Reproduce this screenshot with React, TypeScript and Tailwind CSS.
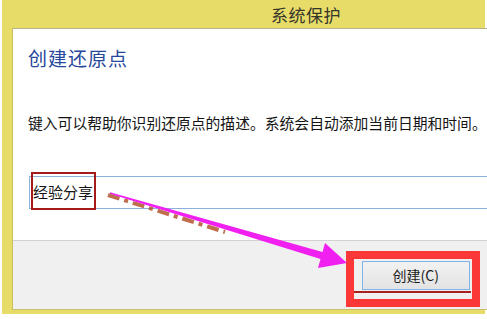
import React from "react";

export default function App() {
  return (
    <div
      className="relative w-[487px] h-[319px] bg-white overflow-hidden"
      style={{ fontFamily: '"Noto Sans CJK SC", "Noto Sans", sans-serif' }}
    >
      <div className="ml-[2px] w-[483px] h-[314px] bg-[#e8dc68] flex flex-col">
        <div className="h-[28px] shrink-0 flex items-center pl-[269px] text-[17px] leading-none text-[#35352a] tracking-[0.5px]">
          系统保护
        </div>
        <div className="flex-1 flex pl-[10px] pb-[4px]">
          <div className="flex-1 flex flex-col border-l border-t border-b border-l-[#c9bf5c] border-t-[#b9b48a] border-b-[#c9c070]">
            <div className="h-[211px] bg-white flex flex-col pl-[15px]">
              <div className="mt-[17px] text-[19px] leading-[24px] text-[#26479b] tracking-[1px]">
                创建还原点
              </div>
              <div className="mt-[43px] text-[14.8px] leading-[20px] text-[#141414] whitespace-nowrap">
                键入可以帮助你识别还原点的描述。系统会自动添加当前日期和时间。
              </div>
              <div className="mt-[43px] ml-[1px] h-[33px] border border-r-0 border-[#8ab2da] flex items-center pl-[3px] text-[15px] text-[#141414]">
                经验分享
              </div>
            </div>
            <div className="h-px bg-[#d2d2d2]" />
            <div className="flex-1 bg-[#f0f0f0] flex justify-end items-start pt-[20px] pr-[17px]">
              <div className="w-[108px] h-[29px] border border-[#7fb5e8] bg-gradient-to-b from-[#f2f2f2] to-[#e3e3e3] flex items-center justify-center text-[14px] text-[#1a1a1a]">
                创建(C)
              </div>
            </div>
          </div>
        </div>
      </div>

      {/* dark red box around input text */}
      <div className="absolute left-[31px] top-[172px] w-[65px] h-[38px] border-2 border-[#a51a1a]" />

      {/* red highlight box around button */}
      <div className="absolute left-[346px] top-[251px] w-[134px] h-[56px] border-[8px] border-[#fb3838]" />
      <div className="absolute left-[354px] top-[291px] w-[117px] h-[2px] bg-[#a82020]" />

      <svg
        className="absolute left-0 top-0 pointer-events-none"
        width="487"
        height="319"
        viewBox="0 0 487 319"
      >
        <line
          x1="108"
          y1="195"
          x2="225"
          y2="232"
          stroke="#b4552f"
          strokeWidth="4"
          strokeDasharray="12 5 4 5"
          opacity="0.85"
        />
        <polygon
          points="110,192.2 322.5,252.1 325,243 347,263 318,268 320.5,258.9 110,193.8"
          fill="#f020f0"
        />
      </svg>
    </div>
  );
}
